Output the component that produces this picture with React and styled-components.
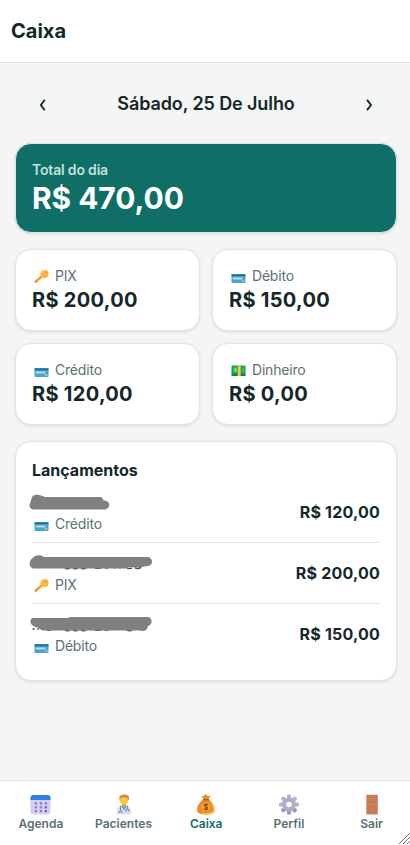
import React from "react";
import styled, { createGlobalStyle } from "styled-components";

const GlobalStyle = createGlobalStyle`
  * { box-sizing: border-box; }
  body { margin: 0; background: #f4f6f5; color: #14272a; font-family: Inter, "Liberation Sans", sans-serif; }
`;

const Screen = styled.div`
  height: 845px;
  display: flex;
  flex-direction: column;
  overflow: hidden;
`;

const Header = styled.header`
  height: 63px;
  flex: none;
  display: flex;
  align-items: center;
  padding: 0 11px;
  background: #fff;
  border-bottom: 1px solid #dfe4e3;
`;

const Title = styled.h1`
  margin: 0;
  font-size: 20px;
  line-height: 28px;
  font-weight: 650;
`;

const Main = styled.main`
  flex: 1;
  padding: 16px 13px 0 15px;
  display: flex;
  flex-direction: column;
  gap: 16px;
`;

const DateBar = styled.div`
  height: 48px;
  display: flex;
  align-items: center;
  justify-content: space-between;
  padding: 0 17px;
`;

const DateText = styled.h2`
  margin: 0;
  font-size: 18px;
  font-weight: 600;
  letter-spacing: -0.1px;
`;

const ArrowButton = styled.button`
  width: 21px;
  height: 40px;
  padding: 3px 0 0;
  border: 0;
  background: none;
  color: inherit;
  display: flex;
  align-items: center;
  justify-content: center;
`;

const Card = styled.section`
  background: #fff;
  border: 1px solid #e0e6e5;
  border-radius: 16px;
  box-shadow: 0 1px 3px rgba(20, 39, 42, 0.13);
  padding: 16px;
`;

const TotalCard = styled(Card)`
  height: 90px;
  background: #0f6e65;
  color: #fff;
`;

const TotalLabel = styled.div`
  font-size: 14px;
  line-height: 20px;
  font-weight: 600;
  letter-spacing: -0.18px;
  color: #c3e0dc;
`;

const TotalValue = styled.div`
  font-size: 30px;
  line-height: 36px;
  font-weight: 750;
  letter-spacing: -0.1px;
`;

const Grid = styled.div`
  display: grid;
  grid-template-columns: 1fr 1fr;
  gap: 12px;
`;

const MethodCard = styled(Card)`
  height: 82px;
`;

const MethodLabel = styled.div`
  display: flex;
  align-items: center;
  gap: 4px;
  height: 20px;
  font-size: 14px;
  line-height: 20px;
  color: #5c7075;
  letter-spacing: -0.2px;
`;

const MethodValue = styled.div`
  font-size: 20px;
  line-height: 28px;
  font-weight: 700;
  letter-spacing: 0.3px;
`;

const Entries = styled(Card)`
  height: 240px;
`;

const EntriesTitle = styled.h3`
  margin: 0;
  font-size: 16px;
  line-height: 24px;
  font-weight: 650;
`;

const EntryRow = styled.div`
  height: 61px;
  display: flex;
  align-items: center;
  justify-content: space-between;
  border-bottom: 1px solid ${(p) => (p.$last ? "transparent" : "#dfe4e3")};
`;

const EntryInfo = styled.div`
  display: flex;
  flex-direction: column;
  padding-top: 2px;
`;

const EntryAmount = styled.div`
  font-size: 16px;
  line-height: 24px;
  font-weight: 650;
  letter-spacing: 0.2px;
`;

const Redaction = styled.svg`
  display: block;
  width: 129px;
  height: 22px;
  margin: -1px 0 1px -3.5px;
`;

const Nav = styled.nav`
  position: relative;
  height: 65px;
  flex: none;
  display: grid;
  grid-template-columns: repeat(5, 82.7px);
  background: #fff;
  border-top: 1px solid #dfe4e3;
`;

const NavItem = styled.a`
  display: flex;
  flex-direction: column;
  align-items: center;
  padding: 12px 1px 0 0;
  font-size: 12px;
  line-height: 16px;
  font-weight: 600;
  color: ${(p) => (p.$active ? "#0f6e65" : "#5c7075")};
`;

const NavIcon = styled.svg`
  width: 22px;
  height: 22px;
  margin-bottom: 1px;
`;

const ResizeGrip = styled.svg`
  position: absolute;
  right: 0;
  bottom: 1px;
  width: 12px;
  height: 12px;
`;

const MethodSvg = styled.svg`
  flex: none;
  width: 19px;
  height: 20px;
`;

function MethodIcon({ kind }) {
  if (kind === "pix") {
    return (
      <MethodSvg viewBox="0 0 19 20">
        <path d="M10 10.200 3.700 15.600" stroke="#f39a3b" strokeWidth="2.500" strokeLinecap="round" />
        <path d="m4.300 15.200.7 1" stroke="#dd7d38" strokeWidth="1.200" />
        <circle cx="12.500" cy="8" r="4.100" fill="#fbb63b" />
        <path d="M9.400 7.600a4 4 0 0 1 4-3.200" stroke="#fdce59" strokeWidth="1.300" fill="none" />
        <circle cx="14.200" cy="6.300" r=".8" fill="#e88b35" />
      </MethodSvg>
    );
  }
  if (kind === "cash") {
    return (
      <MethodSvg viewBox="0 0 19 20">
        <rect x="2.500" y="5.500" width="14" height="10.500" rx="1" fill="#18a150" />
        <rect x="2.500" y="14.300" width="14" height="1.700" rx=".8" fill="#0c803f" />
        <ellipse cx="6.300" cy="10" rx="1.800" ry="2.700" fill="#5dd77a" />
        <rect x="8.700" y="5.500" width="3" height="10.500" fill="#f3c64c" />
        <path d="M14 7.500v5" stroke="#4bc66e" strokeWidth="1.500" />
      </MethodSvg>
    );
  }
  return (
    <MethodSvg viewBox="0 0 19 20">
      <rect x="2.500" y="8" width="14" height="9" rx="0.800" fill="#48a5d0" />
      <path d="M2.500 9.300h14" stroke="#1b7199" strokeWidth="1.800" />
      <rect x="3.800" y="11.500" width="9.500" height="2" fill="#b9deee" />
      <path d="M12.800 15h2.600" stroke="#cfd285" strokeWidth="1.300" />
    </MethodSvg>
  );
}

function Chevron({ right }) {
  return (
    <svg width="9" height="14" viewBox="0 0 9 14" fill="none" stroke="currentColor" strokeWidth="1.900">
      <path d={right ? "m2 1.800 4 5.200-4 5.200" : "M6.700 1.800 2.900 7l3.800 5.200"} />
    </svg>
  );
}

const scribbles = [
  {
    cover: "M2.500 8C2.500 4 8 2.900 12 4.500l4 1.500h55c2 0 3 1.500 3.500 3.500 3 0 5.500 1.500 5.700 4 .2 3-2 5-5 5H5c-4 0-5.500-3.500-4-6Z",
    traces: "",
  },
  {
    cover: "M4 6C5 3 12 2 15 5h103c6 0 7 8 1 9l-7 1-6 .5-6-.5-3 1.500H5c-5 0-6-8-1-10.500Z",
    traces: "M36 16c1 1 4 1 5 0M44 16c1 1 4 1 5 0M52 16c1 1 4 1 5 0M66 16.300h6M76 16.100h3M85 15.800v.8M91 15.800v.8M98 15.800c1 1 4 1 5 0M106 15.500c1 1.400 5 1.200 6-.5",
  },
  {
    cover: "M4 5h34l4-1h76c6 0 6 8 1 9-1 5-4 5.500-9 4.500H15c-3 0-4-2-7-3-8-2-8-8.500-4-9.500Z",
    traces: "M4.500 15v2M9 15.500v1.500M14 16v1.300M18 17.300h4M26 16.500v.8M36 17.200c1 .7 4 .7 5 0M44 17.200c1 .7 4 .7 5 0M52 17.200c1 .7 4 .7 5 0M66 17.300h6M76 17.200h3M98 17.200c1 .7 4 .7 5 0",
  },
];

function HiddenName({ shape }) {
  const { cover, traces } = scribbles[shape];
  return (
    <Redaction viewBox="0 0 129 22" fill="none">
      <path d={traces} stroke="#455057" strokeWidth="1.500" />
      <path d={cover} fill="#808080" />
    </Redaction>
  );
}

function NavGlyph({ name }) {
  const glyphs = {
    Agenda: (
      <>
        <rect x="0.500" y="2" width="20" height="19.500" rx="3" fill="#d5cdf4" />
        <path d="M.5 7V5a3 3 0 0 1 3-3h14a3 3 0 0 1 3 3v2Z" fill="#2f80e6" />
        {[5, 10, 15].map((x) =>
          [10.2, 14.2, 18].map((y) => (
            <rect key={`${x}-${y}`} x={x - 0.3} y={y - 1} width="2.300" height="2.300" rx=".7" fill={x === 15 && y > 11 ? "#4267c8" : "#8878b5"} />
          ))
        )}
      </>
    ),
    Pacientes: (
      <>
        <path d="M3.500 21.500c-.3-5 1.500-8 4.500-9h6c3 1 4.500 4 4.200 9Z" fill="#d5dced" />
        <path d="m8 12.500 3 5 3-5Z" fill="#6a9bd0" />
        <path d="M9 9h4v4l-2 1.500L9 13Z" fill="#eba735" />
        <ellipse cx="11" cy="7" rx="4.300" ry="4.700" fill="#ffc243" />
        <path d="M6.500 7C5.500 2.800 8.500 1.500 12 1.600c3.500.1 4.800 2.600 3.600 5.900L14 4.800l-4-.7-2.500 1.500Z" fill="#d38b3e" />
        <path d="M7.500 13v4.500m6.800-4.500v3.300m-1.300 2c0-3 3-3 3 0M6.300 20c0-2.700 2.700-2.700 2.700 0" stroke="#7184b8" strokeWidth="1.100" fill="none" />
      </>
    ),
    Caixa: (
      <>
        <path d="M8.500 6 6.500 3l2.200.3L10.500 1l2 2 3-.5L13.700 6c4 3.500 6.300 7.500 6 11-.2 3.500-3 4.500-8.700 4.500S2.400 20.500 2 17C1.700 13.500 4 9.500 8.500 6Z" fill="#e98c2d" />
        <path d="M14 8c4 4 5.500 9 2.500 11-2 1.300-7 1.500-11 .5 3 3 14.500 3 14.200-2.500C19.500 13 17.500 10 14 8Z" fill="#ffc23d" />
        <path d="M8 6.700h6" stroke="#b85b28" strokeWidth="1.500" />
        <circle cx="11" cy="14" r="4.200" fill="#f7ac35" />
        <path d="M13 12c-1-1.200-3.800-1-3.800.5 0 1.700 3.700.8 3.700 2.700 0 1.600-3 1.700-4 .4M11 10.300v7.400" stroke="#8e451e" strokeWidth="1.200" fill="none" />
      </>
    ),
    Perfil: (
      <>
        {[0, 45, 90, 135, 180, 225, 270, 315].map((a) => (
          <rect key={a} x="9" y="1.500" width="4" height="5.500" rx="1.200" fill={a > 90 && a < 250 ? "#a094bd" : "#bbb1d0"} transform={`rotate(${a} 11 11.500)`} />
        ))}
        <circle cx="11" cy="11.500" r="5.300" stroke="#b3a9ca" strokeWidth="3.300" fill="#fff" />
        <circle cx="11" cy="11.500" r="3.500" stroke="#8b80a4" strokeWidth=".8" fill="#fff" />
      </>
    ),
    Sair: (
      <>
        <rect x="5.300" y="1.800" width="11.500" height="19.700" rx=".7" fill="#cb7c59" />
        <path d="M7.200 4.500h7.600v4H7.200zm0 5.500h7.600v3.500H7.200zm0 5h7.600v4H7.200z" fill="#ce805c" stroke="#c57150" strokeWidth=".5" />
        <circle cx="15.300" cy="12" r=".7" fill="#efa066" />
      </>
    ),
  };
  return <NavIcon viewBox="0 0 22 22">{glyphs[name]}</NavIcon>;
}

const methods = [
  ["pix", "PIX", "R$ 200,00"],
  ["card", "Débito", "R$ 150,00"],
  ["card", "Crédito", "R$ 120,00"],
  ["cash", "Dinheiro", "R$ 0,00"],
];
const entries = [
  ["card", "Crédito", "R$ 120,00"],
  ["pix", "PIX", "R$ 200,00"],
  ["card", "Débito", "R$ 150,00"],
];
const tabs = ["Agenda", "Pacientes", "Caixa", "Perfil", "Sair"];

export default function App() {
  return (
    <Screen>
      <GlobalStyle />
      <Header><Title>Caixa</Title></Header>
      <Main>
        <DateBar>
          <ArrowButton aria-label="Dia anterior"><Chevron /></ArrowButton>
          <DateText>Sábado, 25 De Julho</DateText>
          <ArrowButton aria-label="Próximo dia"><Chevron right /></ArrowButton>
        </DateBar>
        <TotalCard>
          <TotalLabel>Total do dia</TotalLabel>
          <TotalValue>R$ 470,00</TotalValue>
        </TotalCard>
        <Grid>
          {methods.map(([kind, label, value]) => (
            <MethodCard key={label}>
              <MethodLabel><MethodIcon kind={kind} />{label}</MethodLabel>
              <MethodValue>{value}</MethodValue>
            </MethodCard>
          ))}
        </Grid>
        <Entries>
          <EntriesTitle>Lançamentos</EntriesTitle>
          {entries.map(([kind, label, value], i) => (
            <EntryRow key={label} $last={i === entries.length - 1}>
              <EntryInfo>
                <HiddenName shape={i} />
                <MethodLabel><MethodIcon kind={kind} />{label}</MethodLabel>
              </EntryInfo>
              <EntryAmount>{value}</EntryAmount>
            </EntryRow>
          ))}
        </Entries>
      </Main>
      <Nav>
        {tabs.map((name) => (
          <NavItem key={name} $active={name === "Caixa"}>
            <NavGlyph name={name} />
            <span>{name}</span>
          </NavItem>
        ))}
        <ResizeGrip viewBox="0 0 12 12" stroke="#777" strokeWidth="1">
          <path d="M1 12 12 1M5 12l7-7M9 12l3-3" />
        </ResizeGrip>
      </Nav>
    </Screen>
  );
}
